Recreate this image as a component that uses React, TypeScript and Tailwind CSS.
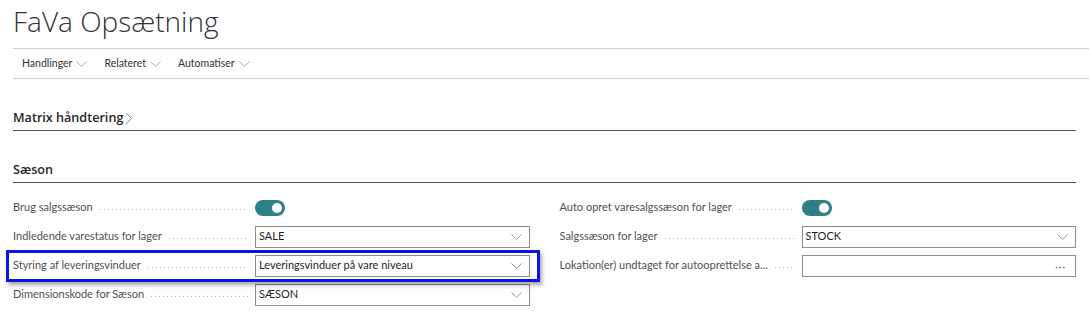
import React from "react";

const font = { fontFamily: 'Lato, "Open Sans", sans-serif' };
const headFont = { fontFamily: '"Open Sans", "Noto Sans", sans-serif' };

function Chevron({ className = "" }: { className?: string }) {
  return (
    <svg width="11" height="6" viewBox="0 0 11 6" className={className} fill="none">
      <path d="M0.5 0.5 L5.5 5.3 L10.5 0.5" stroke="currentColor" strokeWidth="0.9" />
    </svg>
  );
}

function Toggle() {
  return (
    <div className="w-[30px] h-[16px] rounded-full bg-[#2f7f87] flex items-center justify-end pr-[3px]">
      <div className="w-[10px] h-[10px] rounded-full bg-white" />
    </div>
  );
}

function Label({ text }: { text: string }) {
  return (
    <div className="w-[242px] flex items-center pr-[7px]">
      <span className="text-[11px] text-[#505050] whitespace-nowrap">{text}</span>
      <span className="flex-1 ml-[7px] h-[1px] mt-[4px] bg-[linear-gradient(to_right,#b4b4b4_1px,transparent_1px)] bg-[length:4px_1px]" />
    </div>
  );
}

function Select({ value }: { value: string }) {
  return (
    <div className="flex-1 h-[22px] border border-[#8c8c8c] flex items-center pl-[3px] pr-[7px] bg-white">
      <span className="flex-1 text-[11px] text-[#1f1f1f]">{value}</span>
      <Chevron className="text-[#8a8a8a]" />
    </div>
  );
}

function Lookup() {
  return (
    <div className="flex-1 h-[22px] border border-[#8c8c8c] flex items-center justify-end pr-[9px] bg-white">
      <span className="text-[10px] text-[#555] tracking-[1px] leading-none">···</span>
    </div>
  );
}

function Row({ children }: { children: React.ReactNode }) {
  return <div className="flex items-center h-[29px]">{children}</div>;
}

export default function App() {
  return (
    <div className="w-[1089px] h-[330px] bg-white overflow-hidden" style={font}>
      <div className="pl-[13px] h-[48px] flex items-start" style={headFont}>
        <h1 className="text-[28px] font-light text-[#333] leading-none mt-[7px]">FaVa Opsætning</h1>
      </div>
      <div className="ml-[13px] border-t border-b border-[#d0d0d0] h-[31px] flex items-center pl-[9px] gap-[17px]">
        {["Handlinger", "Relateret", "Automatiser"].map((t) => (
          <div key={t} className="flex items-center gap-[4px] text-[10.5px] text-[#333]">
            <span>{t}</span>
            <Chevron className="text-[#a0a0a0]" />
          </div>
        ))}
      </div>
      <div className="px-[13px]">
        <div className="mt-[28px] border-b border-[#505050] h-[24px] flex items-center" style={headFont}>
          <span className="text-[12.6px] font-semibold text-[#262626]">Matrix håndtering</span>
          <svg width="8" height="13" viewBox="0 0 8 13" className="ml-[2px] text-[#777]" fill="none">
            <path d="M1 0.8 L6.5 6.5 L1 12.2" stroke="currentColor" strokeWidth="0.9" />
          </svg>
        </div>
        <div className="mt-[28px] border-b border-[#505050] h-[24px] flex items-center" style={headFont}>
          <span className="text-[12.6px] font-semibold text-[#262626]">Sæson</span>
        </div>
        <div className="mt-[10px] grid grid-cols-2 gap-x-[30px]">
          <div className="flex flex-col">
            <Row>
              <Label text="Brug salgssæson" />
              <Toggle />
            </Row>
            <Row>
              <Label text="Indledende varestatus for lager" />
              <Select value="SALE" />
            </Row>
            <div className="relative">
              <Row>
                <Label text="Styring af leveringsvinduer" />
                <Select value="Leveringsvinduer på vare niveau" />
              </Row>
              <div className="absolute left-[-7px] right-[-10px] top-[-1px] bottom-[-2px] border-[3px] border-[#0a14e6] shadow-[2px_3px_4px_rgba(0,0,0,0.35)] pointer-events-none" />
            </div>
            <Row>
              <Label text="Dimensionskode for Sæson" />
              <Select value="SÆSON" />
            </Row>
          </div>
          <div className="flex flex-col">
            <Row>
              <Label text="Auto opret varesalgssæson for lager" />
              <Toggle />
            </Row>
            <Row>
              <Label text="Salgssæson for lager" />
              <Select value="STOCK" />
            </Row>
            <Row>
              <Label text="Lokation(er) undtaget for autooprettelse a..." />
              <Lookup />
            </Row>
          </div>
        </div>
      </div>
    </div>
  );
}
